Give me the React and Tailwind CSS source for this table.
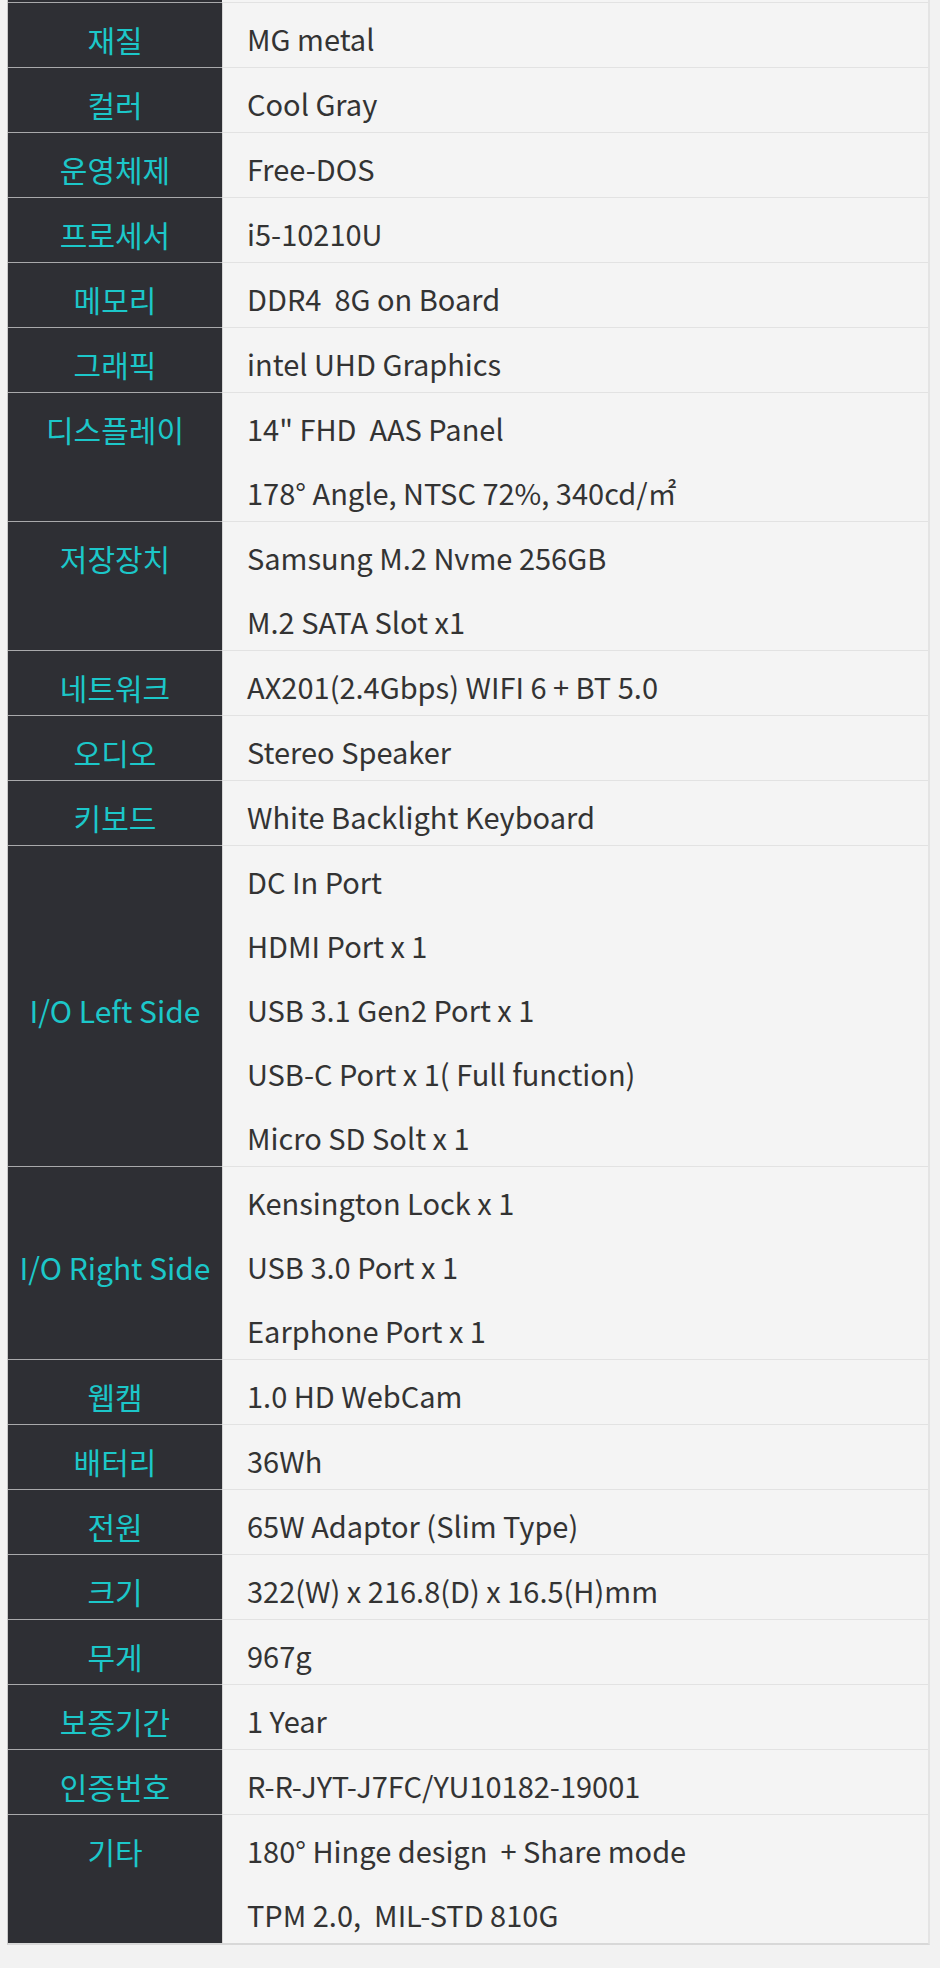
const specs = [
  { label: '재질', values: ['MG metal'] },
  { label: '컬러', values: ['Cool Gray'] },
  { label: '운영체제', values: ['Free-DOS'] },
  { label: '프로세서', values: ['i5-10210U'] },
  { label: '메모리', values: ['DDR4  8G on Board'] },
  { label: '그래픽', values: ['intel UHD Graphics'] },
  { label: '디스플레이', values: ['14" FHD  AAS Panel', '178° Angle, NTSC 72%, 340cd/㎡'] },
  { label: '저장장치', values: ['Samsung M.2 Nvme 256GB', 'M.2 SATA Slot x1'] },
  { label: '네트워크', values: ['AX201(2.4Gbps) WIFI 6 + BT 5.0'] },
  { label: '오디오', values: ['Stereo Speaker'] },
  { label: '키보드', values: ['White Backlight Keyboard'] },
  {
    label: 'I/O Left Side',
    center: true,
    values: ['DC In Port', 'HDMI Port x 1', 'USB 3.1 Gen2 Port x 1', 'USB-C Port x 1( Full function)', 'Micro SD Solt x 1'],
  },
  {
    label: 'I/O Right Side',
    center: true,
    values: ['Kensington Lock x 1', 'USB 3.0 Port x 1', 'Earphone Port x 1'],
  },
  { label: '웹캠', values: ['1.0 HD WebCam'] },
  { label: '배터리', values: ['36Wh'] },
  { label: '전원', values: ['65W Adaptor (Slim Type)'] },
  { label: '크기', values: ['322(W) x 216.8(D) x 16.5(H)mm'] },
  { label: '무게', values: ['967g'] },
  { label: '보증기간', values: ['1 Year'] },
  { label: '인증번호', values: ['R-R-JYT-J7FC/YU10182-19001'] },
  { label: '기타', values: ['180° Hinge design  + Share mode', 'TPM 2.0,  MIL-STD 810G'] },
];

const SpecRow = ({ label, values, center }) => (
  <div className="flex border-t border-[#e2e2e2]">
    <div
      className={`w-[214px] shrink-0 bg-[#2e2f34] border-t border-[#a9a9ab] -mt-px flex justify-center ${
        center ? 'items-center' : 'items-start'
      }`}
    >
      <span className="h-[64px] pt-[8px] flex items-center text-[30px] text-[#1cc7c9]">{label}</span>
    </div>
    <div className="flex-1 border-l border-[#d6d6d6] pl-[24px]">
      {values.map((v, i) => (
        <div key={i} className="h-[64px] pt-[8px] flex items-center text-[29px] text-[#333333] whitespace-pre">
          {v}
        </div>
      ))}
    </div>
  </div>
);

export default function App() {
  return (
    <div
      className="min-h-[1968px] w-[940px] bg-[#f2f2f2] pl-[7px] pr-[10px]"
      style={{ fontFamily: '"Noto Sans CJK KR", "Noto Sans", sans-serif' }}
    >
      <div className="bg-[#f4f4f4] border-l border-[#c8c8c8] border-r-2 border-r-[#e4e4e4] border-b-2 border-b-[#d8d8d8]">
        <div className="flex h-[2px]">
          <div className="w-[214px] bg-[#2e2f34]" />
          <div className="flex-1" />
        </div>
        {specs.map((s) => (
          <SpecRow key={s.label} {...s} />
        ))}
      </div>
    </div>
  );
}
